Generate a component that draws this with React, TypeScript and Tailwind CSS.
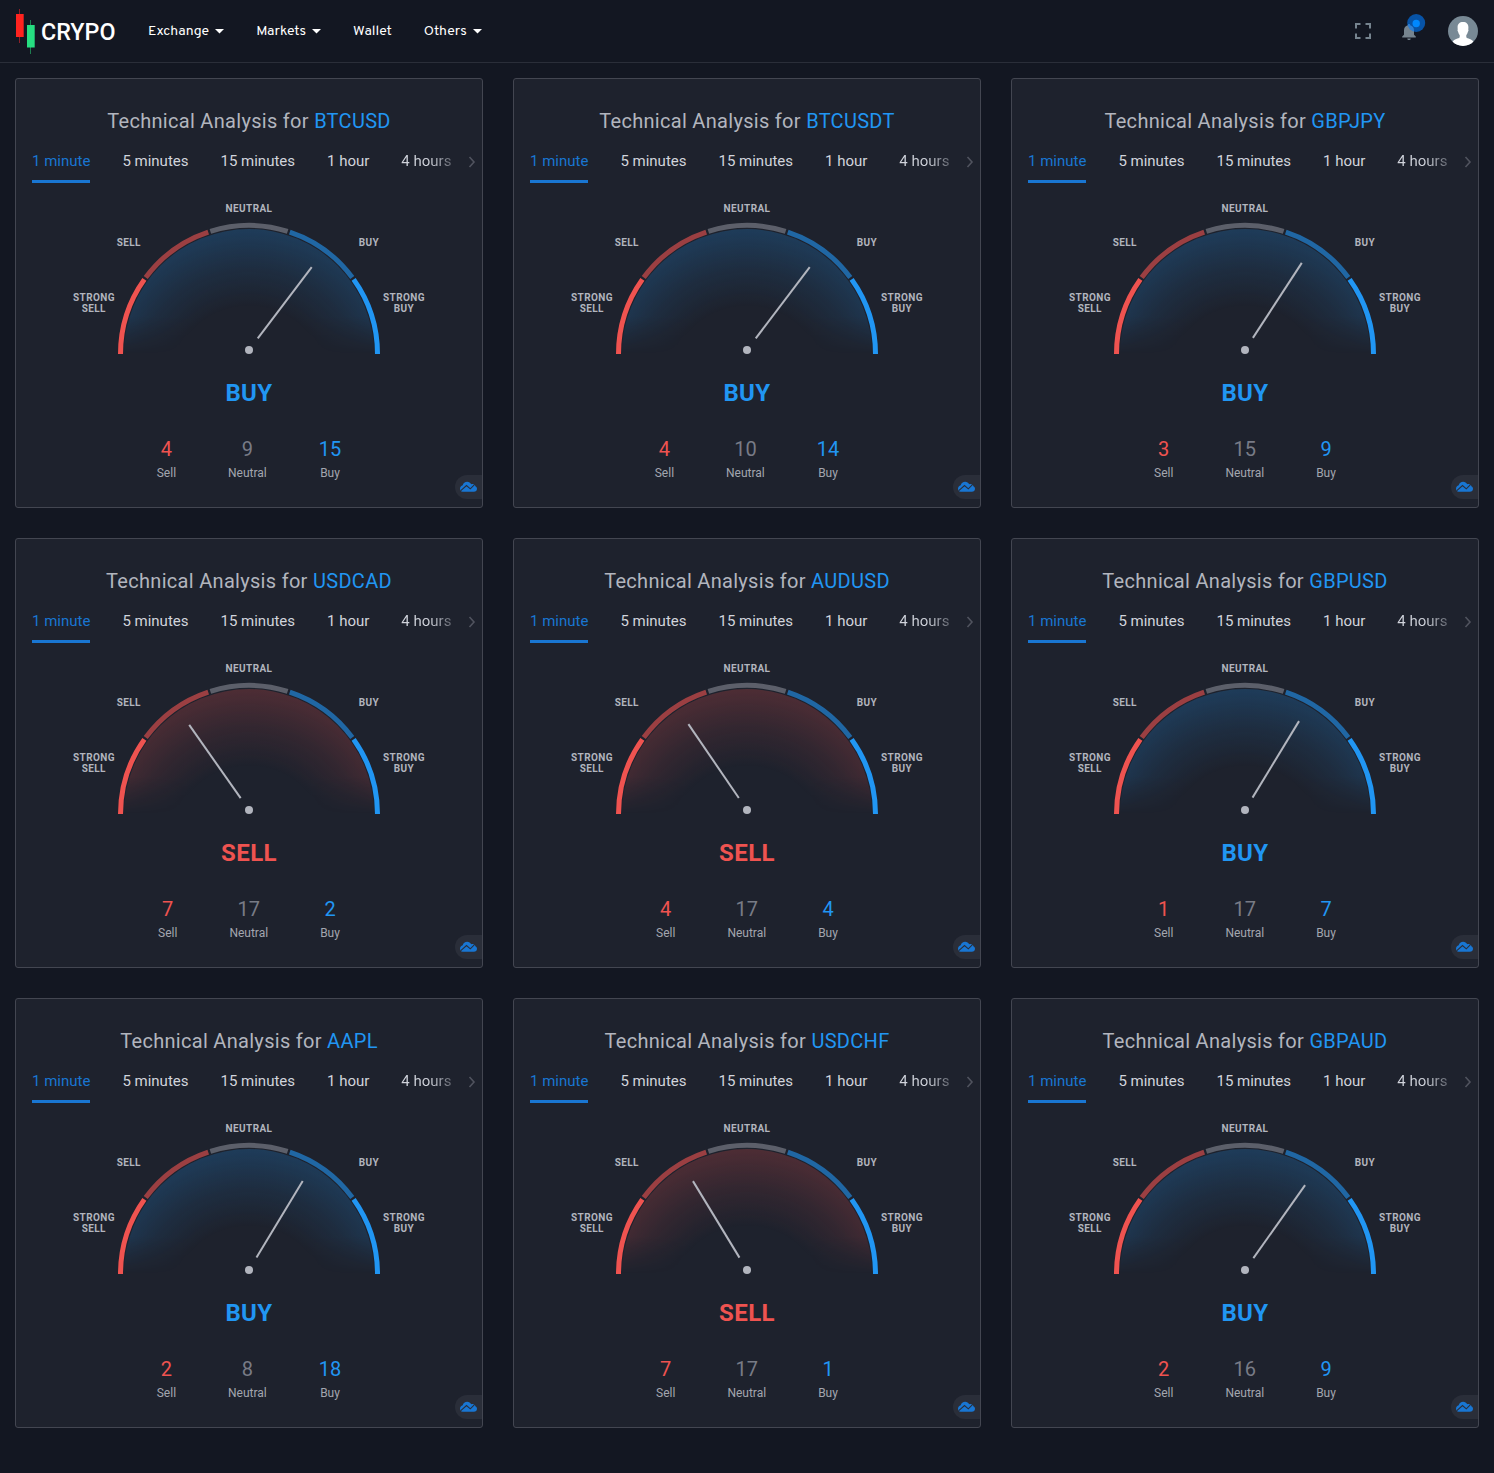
type Signal = "buy" | "sell";

interface Analysis {
  symbol: string;
  signal: Signal;
  angle: number;
  sell: number;
  neutral: number;
  buy: number;
}

const analyses: Analysis[] = [
  { symbol: "BTCUSD", signal: "buy", angle: 37.1, sell: 4, neutral: 9, buy: 15 },
  { symbol: "BTCUSDT", signal: "buy", angle: 37.1, sell: 4, neutral: 10, buy: 14 },
  { symbol: "GBPJPY", signal: "buy", angle: 33.1, sell: 3, neutral: 15, buy: 9 },
  { symbol: "USDCAD", signal: "sell", angle: -35.1, sell: 7, neutral: 17, buy: 2 },
  { symbol: "AUDUSD", signal: "sell", angle: -34.3, sell: 4, neutral: 17, buy: 4 },
  { symbol: "GBPUSD", signal: "buy", angle: 31.3, sell: 1, neutral: 17, buy: 7 },
  { symbol: "AAPL", signal: "buy", angle: 31.1, sell: 2, neutral: 8, buy: 18 },
  { symbol: "USDCHF", signal: "sell", angle: -31.3, sell: 7, neutral: 17, buy: 1 },
  { symbol: "GBPAUD", signal: "buy", angle: 35.3, sell: 2, neutral: 16, buy: 9 },
];

const periods = ["1 minute", "5 minutes", "15 minutes", "1 hour", "4 hours"];

const CX = 233;
const CY = 155;
const R = 128.5;

// Arc between two angles, measured in degrees clockwise from the left end.
function arc(from: number, to: number) {
  const point = (deg: number) => {
    const a = (deg * Math.PI) / 180;
    return `${(CX - R * Math.cos(a)).toFixed(2)} ${(CY - R * Math.sin(a)).toFixed(2)}`;
  };
  return `M${point(from)}A${R} ${R} 0 0 1 ${point(to)}`;
}

const segments = [
  { d: arc(0, 35.5), color: "#ef5350", opacity: 1 },
  { d: arc(36.5, 71.5), color: "#ef5350", opacity: 0.6 },
  { d: arc(72.5, 107.5), color: "#868993", opacity: 0.6 },
  { d: arc(108.5, 143.5), color: "#2196f3", opacity: 0.6 },
  { d: arc(144.5, 180), color: "#2196f3", opacity: 1 },
];

const labels = [
  { text: "NEUTRAL", x: 233, y: 13 },
  { text: "SELL", x: 112.8, y: 47 },
  { text: "BUY", x: 353, y: 47 },
  { text: "STRONG", x: 78, y: 102 },
  { text: "SELL", x: 77.8, y: 113 },
  { text: "STRONG", x: 388, y: 102 },
  { text: "BUY", x: 388, y: 113 },
];

function Gauge({ id, signal, angle }: { id: string; signal: Signal; angle: number }) {
  const tint = signal === "buy" ? "#2196f3" : "#ef5350";
  return (
    <svg className="block h-[160px] w-[466px]" viewBox="0 0 466 160">
      <defs>
        <radialGradient id={`glow-${id}`} gradientUnits="userSpaceOnUse" cx={CX} cy={CY + 30} r="155">
          <stop offset="0.5" stopColor={tint} stopOpacity="0" />
          <stop offset="0.75" stopColor={tint} stopOpacity="0.1" />
          <stop offset="1" stopColor={tint} stopOpacity="0.23" />
        </radialGradient>
        <linearGradient id={`fade-${id}`} x1="0" y1="0" x2="0" y2="1">
          <stop offset="0.7" stopColor="#fff" />
          <stop offset="1" stopColor="#fff" stopOpacity="0" />
        </linearGradient>
        <mask id={`mask-${id}`}>
          <rect x="100" y="30" width="266" height="125" fill={`url(#fade-${id})`} />
        </mask>
      </defs>
      <path
        d={`M${CX - 125} ${CY}A125 125 0 0 1 ${CX + 125} ${CY}Z`}
        fill={`url(#glow-${id})`}
        mask={`url(#mask-${id})`}
      />
      {segments.map((s) => (
        <path key={s.d} d={s.d} fill="none" stroke={s.color} strokeOpacity={s.opacity} strokeWidth="5" />
      ))}
      <g transform={`rotate(${angle} ${CX} 151)`}>
        <path d={`M${CX} 136.5V47`} stroke="#b2b5be" strokeWidth="2" />
      </g>
      <circle cx={CX} cy="151" r="4" fill="#b2b5be" />
      <g fill="#b2b5be" className="text-[10px] font-bold tracking-[0.4px]" textAnchor="middle">
        {labels.map((l) => (
          <text key={`${l.x}-${l.y}`} x={l.x} y={l.y}>
            {l.text}
          </text>
        ))}
      </g>
    </svg>
  );
}

function Count({ value, label, color }: { value: number; label: string; color: string }) {
  return (
    <div className="flex flex-col items-center">
      <span className={`text-[20px] leading-6 ${color}`}>{value}</span>
      <span className="text-[12px] leading-6 text-[#a3a6af]">{label}</span>
    </div>
  );
}

function AnalysisCard({ item }: { item: Analysis }) {
  return (
    <article className="relative flex h-[430px] flex-col overflow-hidden rounded-[3px] border border-[#434651] bg-[#1e222d]">
      <h2 className="mt-[30px] text-center text-[20px] leading-6 tracking-[0.3px] text-[#b2b5be]">
        Technical Analysis for <span className="text-[#2196f3]">{item.symbol}</span>
      </h2>
      <div className="mt-3 flex h-[38px] justify-between pl-4">
        <nav className="flex gap-8 text-[15px] leading-8 whitespace-nowrap text-[#d1d4dc]">
          {periods.map((p, i) => (
            <span
              key={p}
              className={
                i === 0
                  ? "h-[38px] border-b-3 border-[#1976d2] text-[#1976d2]"
                  : i === 4
                    ? "bg-linear-to-r from-[#d1d4dc] from-55% to-[#d1d4dc]/40 bg-clip-text text-transparent"
                    : ""
              }
            >
              {p}
            </span>
          ))}
        </nav>
        <svg className="mt-[11px] mr-[6px] h-3 w-2" viewBox="0 0 8 12" fill="none" stroke="#50535e" strokeWidth="1.6">
          <path d="M1.5 1 6 6 1.5 11" />
        </svg>
      </div>
      <div className="mt-[16px]">
        <Gauge id={item.symbol} signal={item.signal} angle={item.angle} />
      </div>
      <p
        className={`mt-[18px] text-center text-[24px] leading-8 font-bold tracking-[0.4px] ${
          item.signal === "buy" ? "text-[#2196f3]" : "text-[#ef5350]"
        }`}
      >
        {item.signal === "buy" ? "BUY" : "SELL"}
      </p>
      <div className="mt-[28px] flex justify-center gap-[52px]">
        <Count value={item.sell} label="Sell" color="text-[#ef5350]" />
        <Count value={item.neutral} label="Neutral" color="text-[#787b86]" />
        <Count value={item.buy} label="Buy" color="text-[#2196f3]" />
      </div>
      <div className="absolute right-0 bottom-2 flex h-6 w-[27px] items-center rounded-l-full bg-[#2a2e39] pb-px pl-[5px]">
        <svg className="h-[11px] w-[17px]" viewBox="0 0 17 11">
          <path
            d="M3.3 10.8A3 3 0 0 1 0 7.8C0 6 1.200 4.600 2.700 4.200 3.200 2 5 .7 7.200.7c1.800 0 3.200.9 4 2.500.4-.2.8-.3 1.300-.3 1.500 0 2.600.9 2.900 2.300 1 .6 1.600 1.500 1.600 2.600 0 1.700-1.300 3-3.200 3z"
            fill="#1976d2"
          />
          <path d="M.5 9.800 6.500 4.500 10.300 7.800 15 3.200" fill="none" stroke="#2a2e39" strokeWidth="1.100" />
        </svg>
      </div>
    </article>
  );
}

function NavItem({ label, menu = true }: { label: string; menu?: boolean }) {
  return (
    <a className="flex items-center gap-[6px]">
      {label}
      {menu && (
        <svg className="mb-px h-[5px] w-[9px]" viewBox="0 0 9 5" fill="currentColor">
          <path d="M0 0h9L4.500 4.500z" />
        </svg>
      )}
    </a>
  );
}

function Header() {
  return (
    <header className="flex h-[63px] items-center border-b border-[#2a2e39] bg-[#131722] px-[16px] text-white">
      <svg className="-ml-px h-[46px] w-[21px]" viewBox="0 0 21 46">
        <path d="M4.500 1V35" stroke="#8c2028" />
        <path d="M15.500 12V46" stroke="#1d7c50" />
        <rect x="1" y="6" width="7.700" height="23" fill="#ff231f" />
        <rect x="12" y="17" width="7.700" height="22.500" fill="#26de81" />
      </svg>
      <span className="mt-0.5 ml-[5px] w-[107px] text-[23.300px] leading-[30px] font-medium">CRYPO</span>
      <nav className="mt-0.5 flex gap-8 font-['Overpass','Open_Sans',sans-serif] text-[14px] leading-5 font-normal">
        <NavItem label="Exchange" />
        <NavItem label="Markets" />
        <NavItem label="Wallet" menu={false} />
        <NavItem label="Others" />
      </nav>
      <div className="ml-auto flex items-center">
        <svg className="h-4 w-4" viewBox="0 0 16 16" fill="none" stroke="#76848f" strokeWidth="2">
          <path d="M1 5.500V1h4.500M10.500 1H15v4.500M15 10.500V15h-4.500M5.500 15H1v-4.500" />
        </svg>
        <svg className="ml-[30px] h-[34px] w-[25px]" viewBox="0 0 25 34">
          <path
            transform="translate(0 1.5)"
            d="M8 8.500c.8 0 1.200.5 1.200 1.200 2.400.6 3.800 2.500 3.800 5v4.500l1.800 1.900v1H1.200v-1L3 19.200v-4.500c0-2.500 1.400-4.400 3.800-5 0-.7.400-1.200 1.200-1.200zM6.300 23h3.400c0 1-.7 1.600-1.700 1.600S6.300 24 6.300 23z"
            fill="#76848f"
          />
          <circle cx="15.200" cy="9" r="9" fill="#007bff" fillOpacity="0.600" />
          <circle cx="15.200" cy="9.500" r="3.700" fill="#0088ff" />
        </svg>
        <svg className="ml-[22px] h-[30px] w-[30px]" viewBox="0 0 30 30">
          <defs>
            <clipPath id="avatar">
              <circle cx="15" cy="15" r="15" />
            </clipPath>
          </defs>
          <g clipPath="url(#avatar)">
            <rect width="30" height="30" fill="#788995" />
            <path
              d="M15 6c3.500 0 5.400 2 5.400 5.200 0 1.200-.1 1.800-.2 2.400.5.300.4 1.500-.400 2.300-.3 1.400-.8 2.300-1.500 3v2.300c.6 1.500 6.200 1.600 7.200 4.800v5H4.500v-5c1-3.200 6.600-3.300 7.200-4.800v-2.300c-.7-.7-1.200-1.600-1.500-3-.8-.8-.9-2-.4-2.300-.1-.6-.2-1.200-.2-2.400C9.600 8 11.500 6 15 6z"
              fill="#fff"
            />
          </g>
        </svg>
      </div>
    </header>
  );
}

export default function App() {
  return (
    <div className="min-h-[1473px] bg-[#131722] font-['Roboto',sans-serif]">
      <Header />
      <main className="grid grid-cols-3 gap-[30px] p-[15px]">
        {analyses.map((a) => (
          <AnalysisCard key={a.symbol} item={a} />
        ))}
      </main>
    </div>
  );
}
